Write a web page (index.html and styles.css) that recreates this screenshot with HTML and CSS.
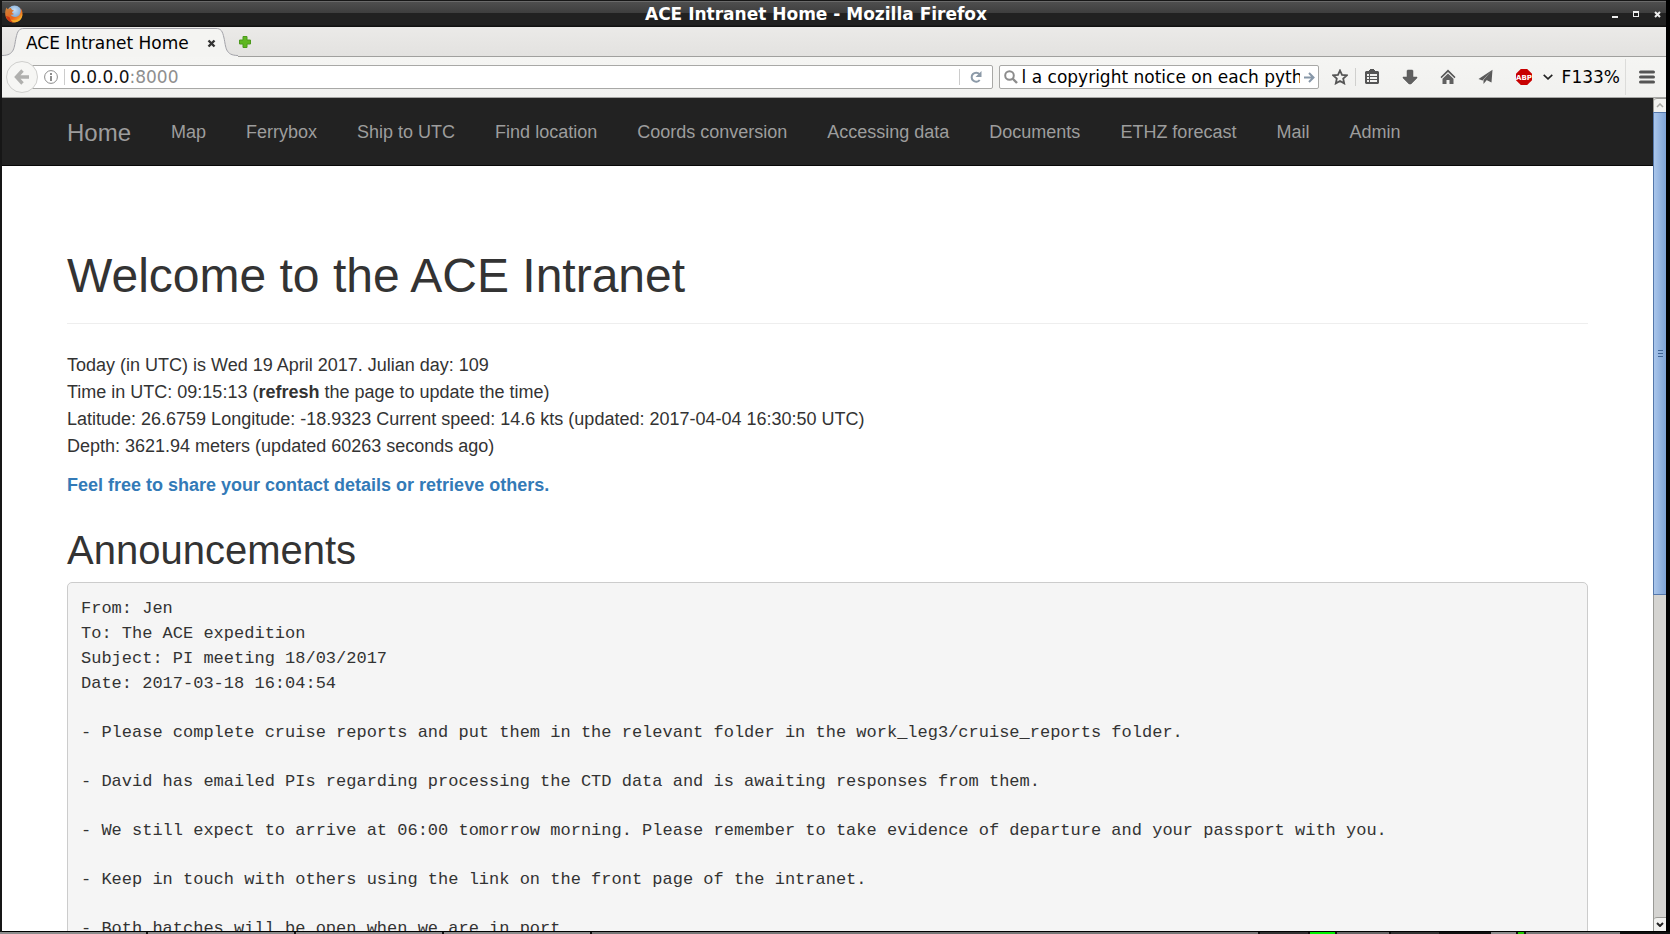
FILE: index.html
```html
<!DOCTYPE html>
<html lang="en">
<head>
<meta charset="utf-8">
<title>ACE Intranet Home</title>
<link rel="stylesheet" href="styles.css">
</head>
<body>
<div class="window">
  <header class="titlebar">
    <svg class="logo" width="18" height="18" viewBox="0 0 18 18" aria-hidden="true">
      <defs>
        <linearGradient id="fox" x1="0" y1="0" x2="1" y2="1">
          <stop offset="0" stop-color="#c9853f"/><stop offset=".55" stop-color="#e8641b"/><stop offset="1" stop-color="#ffc93c"/>
        </linearGradient>
        <radialGradient id="globe" cx=".5" cy=".3" r=".8">
          <stop offset="0" stop-color="#c4dcf3"/><stop offset=".6" stop-color="#7fa8d4"/><stop offset="1" stop-color="#31588f"/>
        </radialGradient>
      </defs>
      <circle cx="9.500" cy="8" r="7.500" fill="url(#globe)"/>
      <path d="M1.500 2.500C.3 5-.2 8 .5 11c1 4 4.500 6.500 8.500 6.500 5 0 8.500-4 8.500-8.500 0-2.500-.8-4.500-2-6 .6 2.500.3 4-.4 5.500-.8 2-2.600 3.500-5 3.500-2.200 0-3.900-1-4.400-2.500 1.200.4 2.400.1 3.300-.6-1.500-.3-2-1-1.900-1.800.6-.6 1.400-.8 1.700-1.500-.9-.6-2-.8-2.600-1.900L6 3C5 3 3.700 3.600 3 4.300 2.200 3.900 1.700 3.200 1.500 2.500z" fill="url(#fox)"/>
      <path d="M2 13c2 3 5 4.500 8 4.300 4.500-.3 7.300-4 7.300-8.300C16 13 13 15 10 15.200 7 15.300 4 14.500 2 13z" fill="#f5b52a" opacity=".7"/>
      <path d="M1 11c1 4 4 6.300 7.500 6.400C6 16 5 14 4.500 12z" fill="#c52a12" opacity=".8"/>
    </svg>
    <h1 class="window-title">ACE Intranet Home - Mozilla Firefox</h1>
    <div class="window-buttons">
      <button type="button" aria-label="Minimize"><svg width="7" height="7" viewBox="0 0 7 7"><path d="M0 5h6v2H0z" fill="#eee"/></svg></button>
      <button type="button" aria-label="Maximize"><svg width="7" height="7" viewBox="0 0 7 7"><path d="M0 0h6v6H0zM1 2v3h4V2z" fill="#eee" fill-rule="evenodd"/></svg></button>
      <button type="button" aria-label="Close window"><svg width="7" height="7" viewBox="0 0 7 7"><path d="M1 1l5 5M6 1L1 6" stroke="#eee" stroke-width="2"/></svg></button>
    </div>
  </header>

  <div class="tabstrip">
    <div class="tab">
      <svg class="tab-edge" width="22" height="30" viewBox="0 0 22 30" aria-hidden="true"><path d="M0 28.500C13 28.500 12 20 14 11 15.500 4 17 1.500 22 1.500V30H0z" fill="#f4f4f2"/><path d="M0 28.500C13 28.500 12 20 14 11 15.500 4 17 1.500 22 1.500" fill="none" stroke="#a2a2a8"/></svg>
      <div class="tab-body">
        <span class="tab-title">ACE Intranet Home</span>
        <button type="button" class="tab-close" aria-label="Close tab"><svg width="9" height="9" viewBox="0 0 9 9"><path d="M1.500 1.500l6 6M7.500 1.500l-6 6" stroke="#333" stroke-width="2.400"/></svg></button>
      </div>
      <svg class="tab-edge" width="22" height="30" viewBox="0 0 22 30" aria-hidden="true"><path d="M22 28.500C9 28.500 10 20 8 11 6.500 4 5 1.500 0 1.500V30H22z" fill="#f4f4f2"/><path d="M22 28.500C9 28.500 10 20 8 11 6.500 4 5 1.500 0 1.500" fill="none" stroke="#a2a2a8"/></svg>
    </div>
    <button type="button" class="new-tab" aria-label="New tab"><svg width="12" height="12" viewBox="0 0 12 12"><path d="M4 .5h4V4h3.500v4H8v3.500H4V8H.5V4H4z" fill="#5fb721" stroke="#4c9a1c"/></svg></button>
  </div>

  <div class="toolbar">
    <div class="urlbar">
      <button type="button" class="back" aria-label="Back"><svg width="16" height="16" viewBox="0 0 16 16"><path d="M8.500 1.500L2.500 8l6 6.500M3 8h12" fill="none" stroke="#b0b0ae" stroke-width="3.400"/></svg></button>
      <svg class="info" width="14" height="14" viewBox="0 0 14 14" aria-hidden="true"><circle cx="7" cy="7" r="6.400" fill="none" stroke="#8c8c8c"/><path d="M6 3h2v2H6zM6 6h2v5H6z" fill="#8c8c8c"/></svg>
      <div class="address"><span>0.0.0.0</span><span class="port">:8000</span></div>
      <button type="button" class="reload" aria-label="Reload"><svg width="12" height="12" viewBox="0 0 12 12"><path d="M9.500 3.200A4.500 4.500 0 1 0 9.700 9" fill="none" stroke="#8c9aa8" stroke-width="2"/><path d="M11.500 0v6h-6z" fill="#8c9aa8"/></svg></button>
    </div>
    <div class="searchbar">
      <svg width="14" height="14" viewBox="0 0 14 14" aria-hidden="true"><circle cx="5.500" cy="5.500" r="4.300" fill="none" stroke="#8c8c8c" stroke-width="2"/><path d="M8.500 8.500l4.500 4.500" stroke="#8c8c8c" stroke-width="2.400"/></svg>
      <input type="text" aria-label="Search" value="l a copyright notice on each pyth">
      <button type="button" aria-label="Go"><svg width="11" height="11" viewBox="0 0 11 11"><path d="M0 5.500h9M5 1l4.500 4.500L5 10" fill="none" stroke="#8797a8" stroke-width="2"/></svg></button>
    </div>
    <div class="tools">
      <button type="button" class="tool star" aria-label="Bookmark this page"><svg width="16" height="16" viewBox="0 0 16 16"><path d="M8 1.500l2 4.400 4.800.5-3.600 3.200 1 4.800L8 12l-4.200 2.400 1-4.800L1.200 6.400 6 5.900z" fill="none" stroke="#555" stroke-width="1.800"/></svg></button>
      <button type="button" class="tool bookmarks" aria-label="Bookmarks"><svg width="16" height="16" viewBox="0 0 16 16"><path d="M5 2V1h1V0h4v1h1v1h3l1 1v11l-1 1H2l-1-1V3l1-1z" fill="#555"/><path d="M3 5h2v2H3zM6 5h7v2H6zM3 8h2v2H3zM6 8h7v2H6zM3 11h2v2H3zM6 11h7v2H6z" fill="#f2f2f0"/></svg></button>
      <button type="button" class="tool" aria-label="Downloads"><svg width="16" height="16" viewBox="0 0 16 16"><path d="M5 1.500L6 1h4l1 .5V8h4v1l-6 6H7L1 9V8h4z" fill="#606060" stroke="#555" stroke-width=".5"/></svg></button>
      <button type="button" class="tool" aria-label="Home"><svg width="16" height="16" viewBox="0 0 16 16"><path d="M8 .5l7.500 7.500-1 1.200L8 2.900 1.500 9.200l-1-1.200z" fill="#555"/><path d="M8 4.500l5.500 5.300V15H9.500v-4h-3v4h-4V9.800z" fill="#606060"/></svg></button>
      <button type="button" class="tool" aria-label="Share"><svg width="16" height="16" viewBox="0 0 16 16"><path d="M14.500.8L.5 10l4 1.500zM14.500.8L5.500 11v4l2.500-3zM14.500.8L8.500 11l5 2.500z" fill="#5a5a5a"/></svg></button>
      <button type="button" class="tool" aria-label="Adblock Plus"><svg width="16" height="16" viewBox="0 0 16 16"><path d="M4.800 0h6.400L16 4.800v6.400L11.200 16H4.800L0 11.200V4.800z" fill="#c80000"/><text x="8" y="11" text-anchor="middle" class="abp-text">ABP</text></svg></button>
      <button type="button" class="tool chevron" aria-label="Adblock Plus menu"><svg width="10" height="6" viewBox="0 0 10 6"><path d="M.7.800L5 4.800 9.300.8" fill="none" stroke="#222" stroke-width="1.600"/></svg></button>
      <button type="button" class="tool zoom">F133%</button>
      <button type="button" class="tool menu" aria-label="Open menu"><svg width="16" height="14" viewBox="0 0 16 14"><path d="M1.500 2h13M1.500 7h13M1.500 12h13" stroke="#555" stroke-width="3" stroke-linecap="round"/></svg></button>
    </div>
  </div>

  <div class="viewport">
    <div class="page">
      <nav class="navbar">
        <div class="container nav-row">
          <a class="brand" href="#">Home</a>
          <a href="#">Map</a>
          <a href="#">Ferrybox</a>
          <a href="#">Ship to UTC</a>
          <a href="#">Find location</a>
          <a href="#">Coords conversion</a>
          <a href="#">Accessing data</a>
          <a href="#">Documents</a>
          <a href="#">ETHZ forecast</a>
          <a href="#">Mail</a>
          <a href="#">Admin</a>
        </div>
      </nav>
      <main class="container">
        <div class="page-header"><h1>Welcome to the ACE Intranet</h1></div>
        <p>Today (in UTC) is Wed 19 April 2017. Julian day: 109<br>
        Time in UTC: 09:15:13 (<strong>refresh</strong> the page to update the time)<br>
        Latitude: 26.6759 Longitude: -18.9323 Current speed: 14.6 kts (updated: 2017-04-04 16:30:50 UTC)<br>
        Depth: 3621.94 meters (updated 60263 seconds ago)</p>
        <p><a class="contact" href="#">Feel free to share your contact details or retrieve others.</a></p>
        <h2>Announcements</h2>
        <div class="message">
          <p>From: Jen<br>To: The ACE expedition<br>Subject: PI meeting 18/03/2017<br>Date: 2017-03-18 16:04:54</p>
          <p>- Please complete cruise reports and put them in the relevant folder in the work_leg3/cruise_reports folder.</p>
          <p>- David has emailed PIs regarding processing the CTD data and is awaiting responses from them.</p>
          <p>- We still expect to arrive at 06:00 tomorrow morning. Please remember to take evidence of departure and your passport with you.</p>
          <p>- Keep in touch with others using the link on the front page of the intranet.</p>
          <p>- Both hatches will be open when we are in port</p>
        </div>
      </main>
    </div>
    <div class="scrollbar">
      <div class="scroll-arrow"><svg width="8" height="5" viewBox="0 0 8 5"><path d="M1 4l3-3 3 3" fill="none" stroke="#a8a8a4" stroke-width="1.500"/></svg></div>
      <div class="scroll-track">
        <div class="scroll-thumb"><svg width="5" height="8" viewBox="0 0 5 8"><path d="M0 .5h5M0 3.500h5M0 6.500h5" stroke="#3f6597"/></svg></div>
      </div>
      <div class="scroll-arrow"><svg width="8" height="5" viewBox="0 0 8 5"><path d="M1 1l3 3 3-3" fill="none" stroke="#222" stroke-width="2"/></svg></div>
    </div>
  </div>
</div>
<div class="taskbar"><span class="task wide"></span><span class="task wide"></span><span class="task wide"></span><span class="task wide"></span><span class="task rest"></span><span class="task gap"></span><span class="task green"></span><span class="task mid"></span><span class="task gap"></span><span class="task dark"></span><span class="task plain"></span><span class="task led"></span><span class="task long"></span><span class="task dark"></span></div>
</body>
</html>
```

FILE: styles.css
```css
* { box-sizing: border-box; }

body {
  margin: 0;
  height: 100vh;
  display: flex;
  flex-direction: column;
  overflow: hidden;
  background: #000;
  font-family: "DejaVu Sans", sans-serif;
}

button { border: 0; padding: 0; background: none; font: inherit; color: inherit; }
svg { display: block; }
p, h1, h2 { margin: 0; }

.window {
  flex: 1;
  min-height: 0;
  display: flex;
  flex-direction: column;
  padding: 0 4px 0 2px;
  background: linear-gradient(90deg, #161616 50%, #000 50%);
}

/* Window title bar */
.titlebar {
  height: 27px;
  flex: none;
  display: grid;
  grid-template-columns: 60px 1fr 60px;
  align-items: center;
  border-top: 1px solid #161616;
  background: linear-gradient(#6a6a6a 1px, #4e4e4e 1px, #3e3e3e 12px, #212121 12px, #212121 24px, #111 25px);
  color: #fff;
}
.logo { margin-left: 3px; }
.window-title { margin-right: 36px; font-size: 17px; line-height: 20px; font-weight: bold; text-align: center; }
.window-buttons { display: flex; justify-content: flex-end; gap: 14px; padding-right: 5px; }

/* Tabs */
.tabstrip {
  height: 30px;
  flex: none;
  display: flex;
  align-items: center;
  background: linear-gradient(#ebeae8, #e3e2e0);
  border-bottom: 1px solid #a0a09e;
}
.tab { display: flex; height: 30px; margin-bottom: -1px; }
.tab-body {
  display: flex;
  align-items: center;
  gap: 18px;
  margin-top: 1px;
  padding-left: 2px;
  border-top: 1px solid #a2a2a8;
  background: #f4f4f2;
}
.tab-title { font-size: 17px; line-height: 20px; color: #000; }
.new-tab { margin-left: 1px; }

/* Toolbar */
.toolbar {
  height: 41px;
  flex: none;
  display: flex;
  align-items: center;
  padding: 0 11px 0 4px;
  background: linear-gradient(#f5f5f3, #f1f1ef);
  border-bottom: 1px solid #a6a6a4;
  font-size: 17px;
  line-height: 20px;
}
.urlbar {
  flex: 1;
  min-width: 0;
  height: 24px;
  display: flex;
  align-items: center;
  margin-left: 16px;
  border: 1px solid #a8a8a6;
  border-radius: 2px;
  background: #fff;
}
.back {
  flex: none;
  width: 32px;
  height: 32px;
  margin-left: -17px;
  display: grid;
  place-items: center;
  border: 1px solid #cfcfcd;
  border-radius: 50%;
  background: #f6f6f4;
}
.info { flex: none; margin: 0 6px; }
.address { flex: 1; padding-left: 5px; border-left: 1px solid #ccc; color: #111; line-height: 16px; }
.port { color: #8f8f8f; }
.reload { width: 33px; height: 16px; display: grid; place-items: center; border-left: 1px solid #ccc; }

.searchbar {
  width: 320px;
  height: 24px;
  display: flex;
  align-items: center;
  margin-left: 6px;
  padding: 0 3px 0 4px;
  border: 1px solid #a8a8a6;
  border-radius: 2px;
  background: #fff;
}
.searchbar input {
  flex: 1;
  min-width: 0;
  height: 20px;
  margin: 0 4px;
  padding: 0;
  border: 0;
  outline: 0;
  background: none;
  font: 17px/20px "DejaVu Sans", sans-serif;
  color: #000;
}

.tools { display: flex; align-items: center; height: 36px; margin-left: 7px; }
.tool { width: 38px; height: 18px; display: grid; place-items: center; color: #000; }
.star { width: 30px; border-right: 1px solid #d0d0ce; }
.bookmarks { width: 32px; margin-right: 3px; }
.abp-text { font: bold 7px "DejaVu Sans", sans-serif; fill: #fff; }
.chevron { width: 10px; }
.zoom { width: auto; height: 36px; padding: 0 5px 0 9px; border-right: 1px solid #dcdcda; }
.menu { width: 16px; margin-left: 13px; }

/* Page viewport */
.viewport { flex: 1; min-height: 0; display: flex; background: #fff; border-bottom: 1px solid #000; }
.page {
  flex: 1;
  min-width: 0;
  overflow: hidden;
  font: 18px/27px "Liberation Sans", Arial, sans-serif;
  color: #333;
}
.container { max-width: 1521px; margin: 0 auto; }
.navbar { background: #222; border-bottom: 1px solid #080808; }
.nav-row { display: flex; gap: 40px; align-items: center; height: 67px; padding-top: 2px; white-space: nowrap; }
.nav-row a { color: #9d9d9d; text-decoration: none; }
.nav-row .brand { font-size: 24px; }

.page-header { margin-top: 83px; padding-bottom: 21px; border-bottom: 1px solid #eee; margin-bottom: 28px; }
.page-header h1 { font-size: 48px; line-height: 53px; font-weight: normal; }
main > p { margin-bottom: 12px; }
.contact { color: #337ab7; font-weight: bold; text-decoration: none; }
h2 { margin: 29px 0 10px; font-size: 40px; line-height: 44px; font-weight: normal; }

.message {
  display: grid;
  gap: 24px;
  padding: 13px;
  background: #f5f5f5;
  border: 1px solid #ccc;
  border-radius: 5px;
  font: 17px/25px "Liberation Mono", "Courier New", monospace;
}

/* Scrollbar */
.scrollbar { flex: none; width: 13px; display: flex; flex-direction: column; border-left: 1px solid #9a9a96; background: #d5d4d1; }
.scroll-arrow { height: 14px; display: grid; place-items: center; background: #f2f2f0; border-top: 1px solid #9a9a96; border-radius: 3px 0 0 0; }
.scroll-track { flex: 1; }
.scroll-thumb {
  height: 60%;
  margin-left: -1px;
  display: grid;
  place-items: center;
  border: 1px solid #5578ab;
  border-right: 0;
  background: linear-gradient(90deg, #aac6eb, #7ea3d6);
}

/* Desktop taskbar edge */
.taskbar { flex: none; height: 2px; display: flex; gap: 2px; background: #111; }
.task { background: #8c8c8c; }
.wide { width: 146px; }
.rest { flex: 1; background: #777; }
.gap { width: 48px; background: #333; }
.green { width: 25px; background: #00f000; }
.mid { width: 52px; background: #666; }
.dark { width: 48px; background: #111; }
.plain { width: 25px; }
.led { width: 6px; background: #1fc800; }
.long { width: 94px; background: #777; }
```
